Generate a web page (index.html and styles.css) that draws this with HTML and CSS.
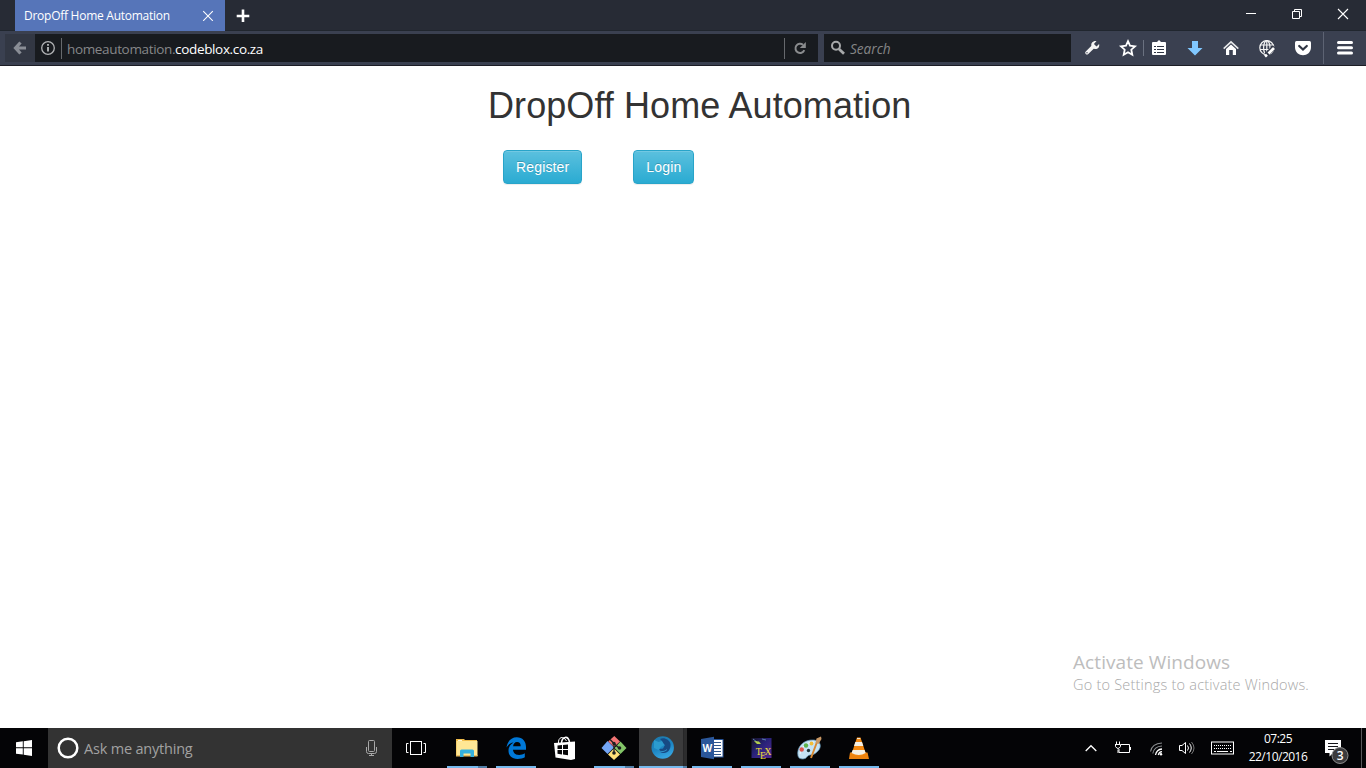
FILE: index.html
```html
<!DOCTYPE html>
<html lang="en">
<head>
<meta charset="utf-8">
<title>DropOff Home Automation</title>
<link rel="stylesheet" href="styles.css">
</head>
<body>
<div class="screen">
  <header class="tabbar">
    <div class="tab">
      <span class="tab-title">DropOff Home Automation</span>
      <svg class="tab-close" viewBox="0 0 12 12" width="12" height="12"><path d="M1.200 2.200L10.800 11.800M10.800 2.200L1.200 11.800" stroke="#fff" stroke-width="1.100"/></svg>
    </div>
    <svg class="new-tab" viewBox="0 0 14 14" width="14" height="14"><path d="M7 1.500V14M.7 8H13.300" stroke="#fff" stroke-width="2.600"/></svg>
    <svg class="window-controls" viewBox="1228 0 138 31" width="138" height="31" fill="none" stroke="#fff">
      <path d="M1246 13.5H1256"/>
      <path d="M1292.500 11.500H1299.500V18.500H1292.500ZM1294.500 11.500V9.500H1301.500V16.500H1299.500"/>
      <path d="M1338 9L1348 19M1348 9L1338 19" stroke-width="1.100"/>
    </svg>
  </header>

  <nav class="toolbar">
    <div class="back"><svg viewBox="5 34 30 28" width="30" height="28"><path d="M20.500 42.500L15.500 48L20.500 53.500M16.500 48H26" fill="none" stroke="#898d95" stroke-width="3.200"/></svg></div>
    <div class="urlbox">
      <svg viewBox="35 34 27 28" width="27" height="28" fill="none"><circle cx="48" cy="48" r="6.300" stroke="#b1b3b5" stroke-width="1.300"/><path d="M48 47V51.500M48 44V45.800" stroke="#c4c6c8" stroke-width="1.700"/><path d="M61.500 38V59" stroke="#66696d"/></svg>
      <span class="url">homeautomation.<b>codeblox.co.za</b></span>
      <svg class="reload" viewBox="784 34 34 28" width="34" height="28" fill="none"><path d="M784.500 38V59" stroke="#66696d"/><path d="M804.300 50.200A4.600 4.600 0 1 1 803 44.800" stroke="#8a8c8e" stroke-width="2"/><path d="M805.800 42V48H799.800Z" fill="#8a8c8e"/></svg>
    </div>
    <div class="searchbox">
      <svg viewBox="824 34 25 28" width="25" height="28" fill="none" stroke="#a7a9aa"><circle cx="836" cy="45.700" r="4" stroke-width="2"/><path d="M839 49L844 53.700" stroke-width="2.800"/></svg>
      <span class="search-text">Search</span>
    </div>
    <svg class="tools" viewBox="1071 31 295 34" width="295" height="34" fill="none">
      <path d="M1087 52.700L1093.500 46.400" stroke="#f4f4f4" stroke-width="3.600" stroke-linecap="round"/>
      <path d="M1096.500 41C1093 40.500 1090.600 43 1091.500 46L1094.500 49C1097.500 49.500 1099.900 47.500 1099.100 44L1096.500 46.500L1093.900 44Z" fill="#f4f4f4"/>
      <circle cx="1087" cy="52.700" r=".7" fill="#3a4050"/>
      <path d="M1128 41.200L1130 45.700L1135 46.300L1131.300 49.700L1132.300 54.700L1128 52.200L1123.700 54.700L1124.700 49.700L1121 46.300L1126 45.700Z" stroke="#fff" stroke-width="1.800"/>
      <path d="M1143.500 40V56" stroke="#6a7180"/>
      <path d="M1153 42H1157L1159 40L1161 42H1165Q1166 42 1166 43V54Q1166 55 1165 55H1153Q1152 55 1152 54V43Q1152 42 1153 42Z" fill="#fff"/>
      <path d="M1154 46.500H1156M1157 46.500H1164M1154 49.500H1156M1157 49.500H1164M1154 52.500H1156M1157 52.500H1164" stroke="#303644" stroke-width="1.100"/>
      <path d="M1192 41H1198V48H1202.500L1195 55.500L1187.500 48H1192Z" fill="#80c7ff"/>
      <path d="M1223.700 48.700L1231 41.900L1238.300 48.700" stroke="#e8e9eb" stroke-width="1.600"/><path d="M1226 49L1231 44.500L1236 49V55H1232.800V50H1229.200V55H1226Z" fill="#fff"/>
      <g stroke="#f4f4f4" stroke-width="1.200"><circle cx="1266.800" cy="47.700" r="7"/><ellipse cx="1266.800" cy="47.700" rx="3.200" ry="7"/><path d="M1260 45H1273.500M1260 49.500H1270M1266.800 41V52"/></g>
      <path d="M1274.500 47L1266 55" stroke="#343a49" stroke-width="4.600"/><path d="M1274 48L1268.500 53.500M1267 54.800L1265 56.500" stroke="#fff" stroke-width="2.800"/>
      <path d="M1296.500 41H1309.500Q1311 41 1311 42.500V47C1311 58 1295 58 1295 47V42.500Q1295 41 1296.500 41Z" fill="#fff"/><path d="M1299.200 46L1303 49.600L1306.800 46" stroke="#303644" stroke-width="2.200" stroke-linecap="round"/>
      <path d="M1323.500 32V64" stroke="#5d6373"/>
      <path d="M1338.500 42.500H1351.500M1338.500 47.700H1351.500M1338.500 53H1351.500" stroke="#fff" stroke-width="3" stroke-linecap="round"/>
    </svg>
  </nav>

  <main class="page">
    <div class="content">
      <h1>DropOff Home Automation</h1>
      <div class="actions"><button class="btn">Register</button><button class="btn">Login</button></div>
    </div>
    <aside class="watermark">
      <div class="wm-title">Activate Windows</div>
      <div class="wm-text">Go to Settings to activate Windows.</div>
    </aside>
  </main>

  <footer class="taskbar">
    <svg class="start" viewBox="0 728 48 40" width="48" height="40"><path d="M16 742.200L22.800 741.300V747.300H16ZM23.700 741.200L32 740V747.300H23.700ZM16 748.300H22.800V754.600L16 753.700ZM23.700 748.300H32V756L23.700 754.800Z" fill="#fff"/></svg>
    <div class="cortana">
      <svg viewBox="48 728 36 40" width="36" height="40"><circle cx="68" cy="748" r="9.300" fill="none" stroke="#fff" stroke-width="2.500"/></svg>
      <span class="ask">Ask me anything</span>
      <svg class="mic" viewBox="352 728 40 40" width="40" height="40" fill="none" stroke="#a8a8a8"><rect x="368.500" y="740.500" width="6" height="11" rx="1"/><path d="M366.500 747V751.500Q366.500 753.500 368.500 753.500H374.500Q376.500 753.500 376.500 751.500V747M371.500 754V756M369 755.500H374"/></svg>
    </div>
    <svg class="taskview" viewBox="392 728 50 40" width="50" height="40" fill="none" stroke="#fff"><rect x="410.500" y="741.500" width="11" height="13"/><path d="M408.500 743.500H406.500V752.500H408.500M423.500 743.500H425.500V752.500H423.500"/></svg>
    <div class="app stacked"><svg viewBox="442 728 49 40" width="49" height="40"><path d="M456 739H464L465 740H477V756H456Z" fill="#f0bc4b"/><path d="M456.500 741H477.500V756H456.500Z" fill="#ffe795"/><path d="M458 740.500H462" stroke="#fff6d5"/><path d="M456 755H477.500V756.500H456Z" fill="#e9bd60"/><path d="M460 757V751Q460 749.500 461.500 749.500H472.500Q474 749.500 474 751V757H470.500V753.500H463.500V757Z" fill="#35b1de"/></svg></div>
    <div class="app"><svg viewBox="491 728 49 40" width="49" height="40"><path d="M506.500 747.500C507.500 741 511.500 737.300 516.800 737.300C522.500 737.300 526 741.300 526 747V749.800H513C513.300 753.300 516 755 519 755C521.300 755 523 754.400 524.800 753.300V757.200C523 758.300 520.500 758.900 517.500 758.900C511.500 758.900 508.500 755.300 508.500 750.700C508.500 747 510.500 744 513.500 742.500C510.300 742.800 508 744.700 506.500 747.500ZM513.100 746.300H520.700C520.700 743.500 519.500 742.100 517 742.100C514.900 742.100 513.400 743.700 513.100 746.300Z" fill="#0078d7" fill-rule="evenodd"/></svg></div>
    <div class="app idle"><svg viewBox="540 728 49 40" width="49" height="40"><path d="M558.500 743C558 737.500 563 735 566.500 741" fill="none" stroke="#fff"/><path d="M561.500 743C562 736.500 568 735 569.500 742" fill="none" stroke="#fff" stroke-width="1.500"/><path d="M554 743L575 741.500V759L571 760L555.500 757.500Z" fill="#fff"/><path d="M557.500 745.500L562 745V749H557.500ZM563 745L568 744.500V749H563ZM557.500 750H562V754.400L557.500 753.800ZM563 750H568V755.200L563 754.500Z" fill="#08080a"/></svg></div>
    <div class="app stacked"><svg viewBox="589 728 49 40" width="49" height="40"><path d="M614.300 736L620 741.500L614 747L608.200 741.500Z" fill="#f27474"/><path d="M607.500 741L614 747.500L607.500 754L601.500 748Z" fill="#74a5f5"/><path d="M620.500 741.500L626.500 748L620.500 754L614.500 748Z" fill="#83c568"/><path d="M614 748.500L620 754.500L614 760L608 754.500Z" fill="#ffe079"/><path d="M610 739.500L614 743.500V753M614 743.500L619 748" fill="none" stroke="#1d2021" stroke-width="1.300"/><g fill="#1d2021"><circle cx="614" cy="743.500" r="1.700"/><circle cx="614" cy="753" r="1.800"/><circle cx="619.500" cy="748" r="1.800"/></g></svg></div>
    <div class="app active"><svg viewBox="638 728 49 40" width="49" height="40"><defs><linearGradient id="fox" x2=".4" y2="1"><stop stop-color="#1c77a8"/><stop offset=".6" stop-color="#1d86c4"/><stop offset="1" stop-color="#35a3df"/></linearGradient></defs><circle cx="662.700" cy="747.500" r="11.200" fill="url(#fox)"/><path d="M660 739C664 737 669.500 739.500 670.500 744C671 749 668 753 664 753C661 753 659 751.500 659.500 749L663 748.500L665 745L662 743.500L662 741Z" fill="#174a84"/><path d="M654 740L658.500 742L662 741L664.500 745L661 747L658.500 750L654 748Z" fill="#2b9bcf"/><path d="M659 750.500C661 752.500 665 751.500 667 749.500" fill="none" stroke="#3293c8"/></svg></div>
    <div class="app"><svg viewBox="687 728 49 40" width="49" height="40"><rect x="710" y="739.500" width="13" height="17.500" fill="#fff" stroke="#275396"/><path d="M714 742.500H721M714 745.500H721M714 748.500H721M714 751.500H721M714 754.500H721" stroke="#31588e"/><path d="M701 739L714 736.700V759.300L701 757Z" fill="#2b579a"/><text x="702.500" y="752" class="word-letter">W</text></svg></div>
    <div class="app"><svg viewBox="736 728 49 40" width="49" height="40"><defs><linearGradient id="tex" y2="1"><stop stop-color="#161324"/><stop offset=".45" stop-color="#282279"/><stop offset="1" stop-color="#55298f"/></linearGradient></defs><rect x="751.500" y="738" width="20" height="20" fill="url(#tex)"/><path d="M753 739L757 742M762 739L766 740" stroke="#597fac"/><path d="M754 741L759 741.500L761 744L757 744Z" fill="#b2ce4d"/><g class="tex-letters"><text x="755.800" y="755">T</text><text x="760" y="758.500">E</text><text x="764.500" y="755">X</text></g></svg></div>
    <div class="app"><svg viewBox="785 728 49 40" width="49" height="40"><path d="M798 756C796 747 804 739 814 740C821 741 822 747 818 751C815 754 813 755 810 755C807 755 807 759 803 759C800 759 798.500 758 798 756Z" fill="#c5e3f5" stroke="#5b8eae" stroke-width=".7"/><path d="M800 754C801 748 806 742 814 742" fill="none" stroke="#effaff"/><circle cx="806" cy="745.500" r="2.200" fill="#5eb34b"/><circle cx="801.700" cy="749.500" r="2.200" fill="#dd554d"/><circle cx="811.500" cy="743.500" r="1.900" fill="#f2bd38"/><circle cx="808.500" cy="750.500" r="1.700" fill="#1e343b"/><path d="M817 742L811 758" stroke="#d88830" stroke-width="2"/><path d="M815.500 743L816.500 738.500L821 736.500L821.500 739L818.500 744Z" fill="#c99865"/></svg></div>
    <div class="app"><svg viewBox="834 728 49 40" width="49" height="40"><path d="M850 752.500H867.500L869 759H849Z" fill="#ec820e"/><path d="M857 737.500H860.500L866 754Q859 758 851.500 754Z" fill="#f48912"/><path d="M855.300 742H862L863.300 746H854ZM852.700 750H864.600L865.600 753Q859 757 851.500 753Z" fill="#f4f0e5"/><path d="M857 738.500H860.300" stroke="#f2e6d2"/></svg></div>
    <svg class="tray" viewBox="1080 728 158 40" width="158" height="40" fill="none" stroke="#fff">
      <path d="M1085.700 751L1091 745.700L1096.300 751" stroke-width="1.300"/>
      <path d="M1121 744.500H1129.500V752.500H1119V749M1130.500 747V750M1115 744.500H1120.500V746.500Q1118 750.500 1115.500 746.500V744.500M1116.500 744V741.500M1119.500 744V741.500M1118 749.500V753"/>
      <g stroke="#8b8e90" stroke-width="1.100"><path d="M1150.500 751.500Q1152 743.500 1162 743M1152.800 753.500Q1154 746.500 1162 746"/></g><path d="M1155.500 755Q1156.500 749.500 1162 749M1158.300 755Q1159 752 1162 751.700" stroke-width="1.300"/><circle cx="1161" cy="754.200" r="1.200" fill="#fff" stroke="none"/>
      <path d="M1179.500 745.500H1182L1185.500 742.500V753.500L1182 750.500H1179.500Z"/><path d="M1187.500 745.500Q1189.500 748 1187.500 750.500M1189.500 743.500Q1193 748 1189.500 752.500"/><path d="M1191.500 742Q1196.500 748 1191.500 754" stroke="#777"/>
      <rect x="1211.500" y="742" width="22" height="12"/><path d="M1214 745.500H1232M1214 748.500H1232" stroke-dasharray="1 1"/><path d="M1214 751.500H1216M1217 751.500H1228M1230 751.500H1232"/>
    </svg>
    <div class="clock"><span class="time">07:25</span><span class="date">22/10/2016</span></div>
    <svg class="notify" viewBox="1318 728 48 40" width="48" height="40"><path d="M1325 740H1341V753H1333L1329.500 756.500V753H1325Z" fill="#fff"/><path d="M1328 743.500H1338M1328 746.500H1338M1328 749.500H1334" stroke="#15151a"/><circle cx="1340" cy="755.500" r="8" fill="#3b3b3d" stroke="#8c8c8c"/><text x="1336.800" y="759.800" class="badge">3</text><path d="M1361.500 728V768" stroke="#57575a"/></svg>
  </footer>
</div>
</body>
</html>
```
FILE: styles.css
```css
* { box-sizing: border-box; }
body { margin: 0; font-family: "Open Sans", "Noto Sans", sans-serif; }
svg { display: block; flex: none; }
.screen { width: 1366px; height: 768px; display: flex; flex-direction: column; overflow: hidden; background: #fff; }
.tabbar { height: 31px; display: flex; align-items: center; background: #272b35; border-bottom: 1px solid #20262e; }
.tab { width: 210px; height: 31px; margin-left: 15px; padding: 0 11px 0 9px; display: flex; align-items: center; justify-content: space-between; background: #5675b9; color: #fff; }
.tab-title { font-size: 12px; letter-spacing: -.26px; white-space: nowrap; }
.new-tab { margin-left: 11px; }
.window-controls { margin-left: auto; }
.toolbar { height: 35px; display: flex; align-items: center; background: #3a4050; border-bottom: 1px solid #1c1d25; padding-left: 5px; }
.back { width: 30px; height: 28px; background: #323743; }
.urlbox { width: 783px; height: 28px; display: flex; align-items: center; background: #181b1f; }
.url { margin: 1px 0 0 5px; font-size: 13.5px; letter-spacing: -.35px; color: #868789; white-space: nowrap; }
.url b { font-weight: 400; color: #fff; }
.reload { margin-left: auto; }
.searchbox { width: 247px; height: 28px; margin-left: 6px; display: flex; align-items: center; background: #181b1f; }
.search-text { margin: 1px 0 0 1px; font-size: 13.6px; font-style: italic; color: #858687; }
.page { position: relative; height: 662px; background: #fff; font-family: "Liberation Sans", Arial, sans-serif; }
.content { width: 440px; margin-left: 488px; padding-top: 20px; }
h1 { margin: 0; font-size: 36px; line-height: 39px; font-weight: 400; letter-spacing: .08px; color: #333; white-space: nowrap; }
.actions { display: flex; gap: 51px; padding: 25px 0 0 15px; }
.btn { height: 34px; padding: 6px 12px; border: 1px solid #28a4c9; border-radius: 4px; background: linear-gradient(#5bc0de, #2aabd2); color: #fff; font: 14px/20px "Liberation Sans", Arial, sans-serif; letter-spacing: .15px; text-shadow: 0 -1px 0 rgba(0,0,0,.2); box-shadow: inset 0 1px 0 rgba(255,255,255,.15), 0 1px 1px rgba(0,0,0,.075); }
.watermark { position: absolute; left: 1073px; top: 583px; color: #bdbdbd; font-family: "Open Sans", sans-serif; white-space: nowrap; }
.wm-title { font-size: 19px; line-height: 26px; letter-spacing: .08px; }
.wm-text { font-size: 14.5px; line-height: 20px; font-weight: 300; letter-spacing: .21px; color: #a8a8a8; }
.taskbar { height: 40px; display: flex; background: #040406; }
.cortana { width: 344px; display: flex; align-items: center; background: #333; }
.ask { font-size: 14.5px; letter-spacing: -.2px; color: #a1a1a1; }
.mic { margin-left: auto; }
.app { position: relative; width: 49px; height: 40px; flex: none; }
.app::after { content: ""; position: absolute; left: 5px; bottom: 0; width: 40px; height: 2px; background: #76b9ed; }
.app.idle::after { display: none; }
.app.stacked::after { background: linear-gradient(90deg, #76b9ed 31px, #527fa7 31px); }
.app.active { background: linear-gradient(90deg, #040406 1px, #3b3b3c 1px, #3b3b3c 45px, #202022 45px, #2c2c2d 46px); }
.app.active::after { left: 1px; width: 48px; background: linear-gradient(90deg, #76b9ed 44px, #527fa7 44px); }
.word-letter { font: bold 10px "Open Sans", sans-serif; fill: #fff; }
.tex-letters { font: 9.5px "Liberation Serif", serif; fill: #f2e036; }
.tray { margin-left: auto; }
.clock { width: 80px; display: flex; flex-direction: column; align-items: center; padding-top: 2px; color: #fff; font-size: 12px; line-height: 18px; letter-spacing: -.5px; }
.badge { font: 600 12px "Open Sans", sans-serif; fill: #fff; }
```
